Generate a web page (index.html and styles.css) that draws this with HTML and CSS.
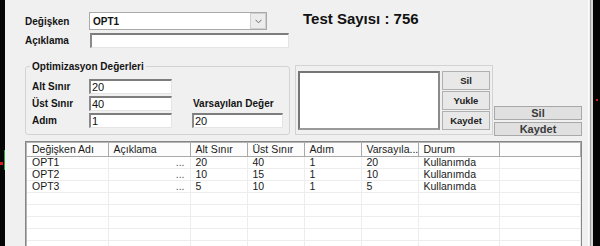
FILE: index.html
```html
<!DOCTYPE html>
<html lang="tr">
<head>
    <meta charset="UTF-8">
    <title>Optimizasyon</title>
    <link rel="stylesheet" href="styles.css">
</head>
<body>
    <div class="edge-left">
        <span class="mark-green"></span>
        <span class="mark-red"></span>
    </div>

    <main class="form">
        <!-- Variable selection and test count -->
        <div class="top">
            <div class="fields">
                <div class="field-row row-var">
                    <label>Değişken</label>
                    <div class="combo">
                        <span class="combo-text">OPT1</span>
                        <span class="combo-btn">
                            <svg width="7" height="5" viewBox="0 0 7 5"><path d="M0.5 0.8 L3.5 3.8 L6.5 0.8" fill="none" stroke="#6a6a6a" stroke-width="1"/></svg>
                        </span>
                    </div>
                </div>
                <div class="field-row row-desc">
                    <label>Açıklama</label>
                    <div class="textbox desc"></div>
                </div>
            </div>
            <div class="test-count">Test Sayısı : 756</div>
        </div>

        <!-- Limits, list and actions -->
        <div class="middle">
            <fieldset class="group">
                <legend>Optimizasyon Değerleri</legend>
                <div class="limits">
                    <label>Alt Sınır</label>
                    <div class="textbox num">20</div>
                    <span></span>
                    <span></span>

                    <label>Üst Sınır</label>
                    <div class="textbox num">40</div>
                    <span></span>
                    <label class="default-label">Varsayılan Değer</label>

                    <label>Adım</label>
                    <div class="textbox num">1</div>
                    <span></span>
                    <div class="textbox num">20</div>
                </div>
            </fieldset>

            <div class="list-group">
                <div class="listbox"></div>
                <div class="small-btns">
                    <button class="btn-small">Sil</button>
                    <button class="btn-small">Yukle</button>
                    <button class="btn-small">Kaydet</button>
                </div>
            </div>

            <div class="big-btns">
                <button class="btn-big">Sil</button>
                <button class="btn-big">Kaydet</button>
            </div>
        </div>

        <!-- Variables grid -->
        <div class="grid">
            <table>
                <colgroup>
                    <col style="width:81px"><col style="width:82px"><col style="width:57px"><col style="width:57px">
                    <col style="width:57px"><col style="width:57px"><col style="width:81px"><col style="width:81px">
                </colgroup>
                <thead>
                    <tr>
                        <th>Değişken Adı</th><th>Açıklama</th><th>Alt Sınır</th><th>Üst Sınır</th>
                        <th>Adım</th><th>Varsayıla...</th><th>Durum</th><th></th>
                    </tr>
                </thead>
                <tbody>
                    <tr><td>OPT1</td><td class="more">...</td><td>20</td><td>40</td><td>1</td><td>20</td><td>Kullanımda</td><td></td></tr>
                    <tr><td>OPT2</td><td class="more">...</td><td>10</td><td>15</td><td>1</td><td>10</td><td>Kullanımda</td><td></td></tr>
                    <tr><td>OPT3</td><td class="more">...</td><td>5</td><td>10</td><td>1</td><td>5</td><td>Kullanımda</td><td></td></tr>
                    <tr><td></td><td></td><td></td><td></td><td></td><td></td><td></td><td></td></tr>
                    <tr><td></td><td></td><td></td><td></td><td></td><td></td><td></td><td></td></tr>
                    <tr><td></td><td></td><td></td><td></td><td></td><td></td><td></td><td></td></tr>
                    <tr><td></td><td></td><td></td><td></td><td></td><td></td><td></td><td></td></tr>
                    <tr><td></td><td></td><td></td><td></td><td></td><td></td><td></td><td></td></tr>
                    <tr><td></td><td></td><td></td><td></td><td></td><td></td><td></td><td></td></tr>
                </tbody>
            </table>
        </div>
    </main>

    <div class="edge-right">
        <span class="mark-red right"></span>
    </div>
</body>
</html>
```

FILE: styles.css
```css
* {
    margin: 0;
    padding: 0;
    box-sizing: border-box;
}

body {
    width: 600px;
    height: 246px;
    overflow: hidden;
    display: flex;
    background: #050505;
    font-family: "Liberation Sans", Arial, sans-serif;
    color: #111;
}

/* Dark window edges on both sides */
.edge-left {
    width: 5px;
    flex-shrink: 0;
    display: flex;
    flex-direction: column;
    align-items: flex-end;
}

.mark-green {
    width: 1px;
    height: 20px;
    margin-top: 150px;
    background: #2f9e3f;
}

.mark-red {
    width: 3px;
    height: 3px;
    margin-top: -8px;
    align-self: flex-start;
    background: #d41c1c;
}

.edge-right {
    flex: 1;
    display: flex;
    flex-direction: column;
    align-items: flex-end;
    background: linear-gradient(to right, #fbfbfb 0 1px, #f0f0f0 1px 2px, #a5a5a5 2px 3px, #d6d6d6 3px 5px, #050505 5px);
}

.mark-red.right {
    width: 2px;
    height: 2px;
    margin-top: 99px;
    margin-right: 2px;
    align-self: flex-end;
}

/* Main form surface */
.form {
    width: 583px;
    flex-shrink: 0;
    height: 246px;
    overflow: hidden;
    background: #f0f0f0;
    padding: 12px 0 0 20px;
    display: flex;
    flex-direction: column;
}

label {
    font-size: 10px;
    font-weight: 700;
    color: #141414;
}

.top {
    display: flex;
    height: 36px;
}

.fields {
    width: 264px;
}

.field-row {
    display: flex;
    align-items: center;
}

.field-row label {
    width: 64px;
}

.row-var {
    height: 18px;
}

.row-desc {
    height: 15px;
    margin-top: 3px;
}

.combo {
    width: 178px;
    height: 18px;
    background: #fff;
    border: 1px solid #a9a9a9;
    display: flex;
    align-items: center;
    justify-content: space-between;
    padding-left: 3px;
}

.combo-text {
    font-size: 10px;
    font-weight: 700;
}

.combo-btn {
    width: 16px;
    height: 16px;
    background: #ececec;
    border: 1px solid #cfcfcf;
    display: flex;
    align-items: center;
    justify-content: center;
}

.textbox {
    height: 15px;
    background: #fff;
    border-style: solid;
    border-width: 2px 1px 1px 2px;
    border-color: #7d7d7d #e4e4e4 #e4e4e4 #8a8a8a;
    font-size: 11px;
    line-height: 12px;
    padding-left: 1px;
    color: #111;
}

.textbox.desc {
    width: 199px;
    margin-left: 1px;
}

.test-count {
    margin: -2px 0 0 14px;
    font-size: 15px;
    line-height: 18px;
    font-weight: 700;
    color: #111;
}

/* Middle band */
.middle {
    display: flex;
    align-items: flex-end;
    margin-top: 12px;
}

.group {
    width: 265px;
    border: 1px solid #d3d3d3;
    border-radius: 3px;
    padding: 6px 6px 6px 6px;
}

.group legend {
    font-size: 10px;
    font-weight: 700;
    line-height: 13px;
    padding: 0 2px;
    margin-left: -2px;
    color: #141414;
}

.limits {
    display: grid;
    grid-template-columns: 57px 83px 20px 91px;
    grid-auto-rows: 15px;
    row-gap: 2px;
    align-items: center;
}

.default-label {
    align-self: center;
    padding-left: 1px;
}

.list-group {
    width: 198px;
    height: 70px;
    margin-left: 5px;
    border: 1px solid #d3d3d3;
    padding: 5px 2px 0 2px;
    display: flex;
    margin-bottom: 0;
}

.listbox {
    width: 142px;
    height: 59px;
    background: #fff;
    border-style: solid;
    border-width: 2px;
    border-color: #767676 #8a8a8a #9a9a9a #767676;
}

.small-btns {
    display: flex;
    flex-direction: column;
    gap: 1px;
    margin-left: 2px;
}

.btn-small {
    width: 48px;
    height: 19px;
    background: #e8e8e8;
    border: 1px solid #b0b0b0;
    font-family: "Liberation Sans", Arial, sans-serif;
    font-size: 9.5px;
    font-weight: 700;
    color: #222;
}

.big-btns {
    width: 88px;
    margin-left: 1px;
    margin-bottom: -1px;
    display: flex;
    flex-direction: column;
    gap: 2px;
}

.btn-big {
    height: 14px;
    background: #e0e0e0;
    border: 1px solid #a8a8a8;
    font-family: "Liberation Sans", Arial, sans-serif;
    font-size: 11px;
    line-height: 11px;
    font-weight: 700;
    color: #3a3a3a;
}

/* Data grid */
.grid {
    width: 557px;
    height: 140px;
    flex-shrink: 0;
    margin-top: 6px;
    background: #fff;
    border: 1px solid #868686;
    box-shadow: inset 1px 1px 0 #b4b4b4;
    padding: 1px 0 0 1px;
}

table {
    width: 553px;
    table-layout: fixed;
    border-collapse: collapse;
    font-size: 10.5px;
    color: #1a1a1a;
}

th {
    height: 13px;
    font-weight: 400;
    text-align: left;
    padding: 0 0 0 5px;
    background: #fcfcfc;
    border-right: 1px solid #a9a9a9;
    border-bottom: 1px solid #a9a9a9;
    line-height: 12px;
    white-space: nowrap;
    overflow: hidden;
}

td {
    height: 12px;
    padding: 0 0 0 5px;
    line-height: 11px;
    border-right: 1px solid #ededed;
    border-bottom: 1px solid #ededed;
    white-space: nowrap;
    overflow: hidden;
}

td.more {
    text-align: right;
    padding-right: 5px;
    color: #555;
}
```
